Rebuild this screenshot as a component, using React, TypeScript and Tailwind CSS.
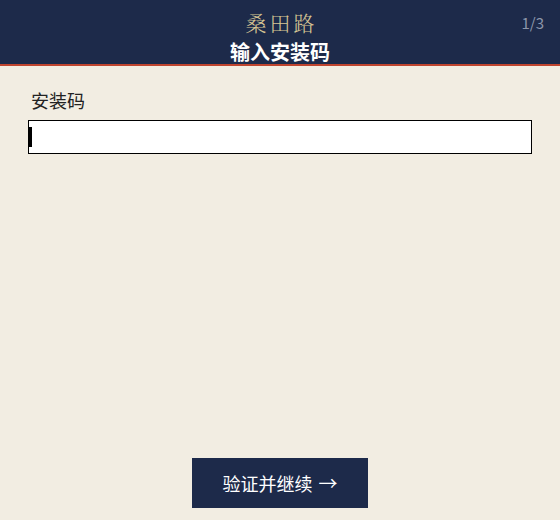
import React from "react";

export default function App() {
  return (
    <div
      className="w-[560px] h-[520px] bg-[#f2ede2] flex flex-col"
      style={{ fontFamily: '"Noto Sans CJK SC", "Noto Sans", sans-serif' }}
    >
      <header className="relative h-[66px] bg-[#1d2a4a] border-b-2 border-[#c0452f] flex flex-col items-center">
        <div
          className="mt-[9px] text-[21px] leading-[26px] tracking-[3px] pl-[3px] font-light text-[#d6c594]"
          style={{ fontFamily: '"Noto Serif CJK SC", "Noto Sans CJK SC", serif' }}
        >
          桑田路
        </div>
        <div className="mt-[4px] text-[20px] leading-[25px] font-bold text-white">输入安装码</div>
        <div className="absolute right-[16px] top-[13px] text-[15px] leading-[20px] text-[#8d97ab]">1/3</div>
      </header>

      <main className="flex-1 flex flex-col px-[28px] pt-[22px]">
        <label className="pl-[3px] text-[18px] leading-[24px] text-[#222]">安装码</label>
        <div className="relative mt-[8px] w-[504px]">
          <input
            type="text"
            className="w-full h-[34px] bg-white border border-black outline-none px-[2px] text-[15px]"
          />
          <span className="absolute left-[1px] top-[7px] w-[3px] h-[20px] bg-black" />
        </div>

        <div className="flex-1" />
        <div className="flex justify-center pb-[12px]">
          <button className="w-[176px] h-[50px] bg-[#1d2a4a] text-white text-[18px] flex items-center justify-center gap-[6px]">
            <span>验证并继续</span>
            <span className="text-[19px]">→</span>
          </button>
        </div>
      </main>
    </div>
  );
}
